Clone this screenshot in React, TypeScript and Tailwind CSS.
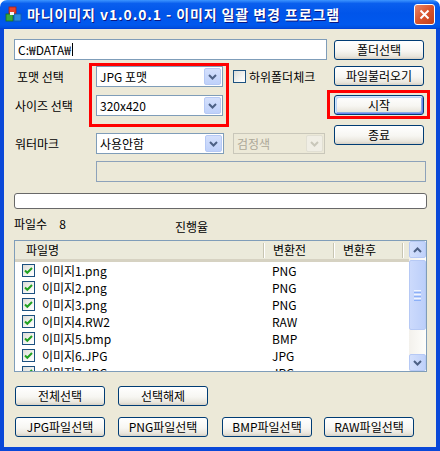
const Chevron = ({ up = false, color = "#4D6185" }: { up?: boolean; color?: string }) => (
  <svg width="9" height="6" viewBox="0 0 9 6">
    <path d={up ? "M1 5 L4.5 1.5 L8 5" : "M1 1 L4.5 4.5 L8 1"} fill="none" stroke={color} strokeWidth="2" />
  </svg>
);

const XpButton = ({ label, focused = false, className = "" }: { label: string; focused?: boolean; className?: string }) => (
  <button
    className={`flex h-[20px] w-[90px] items-center justify-center rounded-[3px] border border-[#003C74] bg-[linear-gradient(180deg,#FFFFFF_0%,#F7F6F2_55%,#E9E6DD_85%,#D6D0C5_100%)] text-[12px] leading-none text-black ${
      focused
        ? "shadow-[inset_1px_1px_0_#CEE7FF,inset_-1px_-1px_0_#6982EE,inset_2px_2px_0_#BCD4F6,inset_-2px_-2px_0_#89ADE4]"
        : ""
    } ${className}`}
  >
    {label}
  </button>
);

const Combo = ({ value, w, disabled = false }: { value: string; w: string; disabled?: boolean }) => (
  <div
    className={`flex h-[21px] ${w} items-center border pl-[3px] pr-[1px] ${
      disabled ? "border-[#C9C7BA] bg-[#ECE9D8] text-[#ACA899]" : "border-[#7F9DB9] bg-white text-black"
    }`}
  >
    <span className="flex-1 text-[12px] leading-none">{value}</span>
    <div
      className={`flex h-[17px] w-[17px] items-center justify-center rounded-[2px] border ${
        disabled
          ? "border-[#E1DFD3] bg-[#F0EEE5]"
          : "border-[#B6C9F5] bg-[linear-gradient(180deg,#D4E0FC_0%,#BFD1FA_100%)]"
      }`}
    >
      <Chevron color={disabled ? "#C9C7BA" : "#4D6185"} />
    </div>
  </div>
);

const CheckBox = ({ checked = false, className = "" }: { checked?: boolean; className?: string }) => (
  <div
    className={`flex h-[13px] w-[13px] shrink-0 items-center justify-center border border-[#1C5180] bg-[linear-gradient(135deg,#DCDCD7_0%,#F8F8F6_70%,#FFFFFF_100%)] ${className}`}
  >
    {checked && (
      <svg width="11" height="11" viewBox="0 0 11 11">
        <path d="M2 5.5 L4.3 7.8 L9 3" fill="none" stroke="#21A121" strokeWidth="2" />
      </svg>
    )}
  </div>
);

const ScrollBtn = ({ up }: { up?: boolean }) => (
  <div className="flex h-[17px] w-[17px] items-center justify-center rounded-[2px] border border-[#B6C9F5] bg-[linear-gradient(90deg,#D4E0FC_0%,#BFD1FA_100%)]">
    <Chevron up={up} />
  </div>
);

const files = [
  ["이미지1.png", "PNG"],
  ["이미지2.png", "PNG"],
  ["이미지3.png", "PNG"],
  ["이미지4.RW2", "RAW"],
  ["이미지5.bmp", "BMP"],
  ["이미지6.JPG", "JPG"],
  ["이미지7.JPG", "JPG"],
];

const HeaderDivider = () => (
  <div className="h-[15px] w-[2px] border-l border-r border-l-[#C7C5B2] border-r-white" />
);

export default function App() {
  return (
    <div className="relative flex h-[451px] w-[440px] flex-col bg-white font-['Noto_Sans_CJK_KR',sans-serif] text-[12px] text-black">
      {/* title bar */}
      <div className="flex h-[29px] shrink-0 items-center rounded-t-[7px] bg-[linear-gradient(180deg,#3D95FF_0%,#0A5FEE_12%,#0055EA_45%,#0058EE_85%,#0050E0_95%,#003DD7_100%)] pl-[5px] pr-[5px]">
        <svg width="17" height="17" viewBox="0 0 17 17">
          <rect x="4" y="1" width="7" height="7" fill="#E8412C" stroke="#A82214" strokeWidth="0.8" />
          <rect x="1" y="8" width="7" height="7" fill="#3BAA3A" stroke="#1D6E1D" strokeWidth="0.8" />
          <rect x="9" y="8" width="7" height="7" fill="#2D8CE0" stroke="#145A9E" strokeWidth="0.8" />
          <rect x="5" y="6" width="4" height="3" fill="#F5F5F5" />
        </svg>
        <span className="ml-[5px] text-[14px] font-bold tracking-[0.9px] text-white [text-shadow:1px_1px_#0A1883]">
          마니이미지 v1.0.0.1 - 이미지 일괄 변경 프로그램
        </span>
        <div className="ml-auto flex h-[21px] w-[21px] items-center justify-center rounded-[3px] border border-white bg-[linear-gradient(135deg,#E8866A_0%,#D9542D_50%,#C1401C_100%)]">
          <svg width="11" height="11" viewBox="0 0 11 11">
            <path d="M1.5 1.5 L9.5 9.5 M9.5 1.5 L1.5 9.5" stroke="white" strokeWidth="2" />
          </svg>
        </div>
      </div>

      {/* body */}
      <div className="flex flex-1 flex-col border-x-4 border-b-4 border-[#0A48D8] bg-[#ECE9D8] pl-[10px] pt-[10px]">
        <div className="flex">
          <div className="flex w-[320px] flex-col">
            <div className="flex h-[21px] w-[313px] items-center border border-[#7F9DB9] bg-white pl-[3px] leading-none">
              C:₩DATA₩<span className="ml-px h-[13px] w-px bg-black" />
            </div>
            <div className="mt-[6px] flex h-[21px] items-center">
              <span className="w-[82px] pl-[3px] leading-none">포맷 선택</span>
              <Combo value="JPG 포맷" w="w-[127px]" />
              <CheckBox className="ml-[10px]" />
              <span className="ml-[3px] leading-none">하위폴더체크</span>
            </div>
            <div className="mt-[8px] flex h-[21px] items-center">
              <span className="w-[82px] pl-px leading-none">사이즈 선택</span>
              <Combo value="320x420" w="w-[127px]" />
            </div>
            <div className="mt-[17px] flex h-[21px] items-center">
              <span className="w-[82px] pl-px leading-none">워터마크</span>
              <Combo value="사용안함" w="w-[128px]" />
              <div className="ml-[9px]">
                <Combo value="검정색" w="w-[92px]" disabled />
              </div>
            </div>
          </div>
          <div className="flex flex-col">
            <XpButton label="폴더선택" className="mt-px" />
            <XpButton label="파일불러오기" className="mt-[6px]" />
            <XpButton label="시작" focused className="mt-[9px]" />
            <XpButton label="종료" className="mt-[10px]" />
          </div>
        </div>

        <div className="ml-[82px] mt-[7px] h-[21px] w-[330px] border border-[#8DA2BA] bg-[#ECE9D8]" />

        <div className="mt-[11px] h-[16px] w-[413px] rounded-[3px] border border-[#686868] bg-white" />

        <div className="mt-[7px] flex h-[16px] items-center leading-none">
          <span className="flex w-[161px] items-center">
            <span>파일수</span>
            <span className="ml-[12px]">8</span>
          </span>
          <span className="mt-[5px]">진행율</span>
        </div>

        {/* file list */}
        <div className="mt-[8px] flex h-[132px] w-[413px] border border-[#7F9DB9] bg-white">
          <div className="flex flex-1 flex-col overflow-hidden">
            <div className="flex h-[21px] shrink-0 items-center border-b-[3px] border-[#D6D2C2] bg-[#EBEADB] leading-none">
              <span className="w-[248px] pl-[11px]">파일명</span>
              <HeaderDivider />
              <span className="w-[68px] pl-[8px]">변환전</span>
              <HeaderDivider />
              <span className="w-[67px] pl-[8px]">변환후</span>
              <HeaderDivider />
            </div>
            {files.map(([name, type]) => (
              <div key={name} className="flex h-[17px] shrink-0 items-center leading-none">
                <CheckBox checked className="ml-[7px]" />
                <span className="ml-[7px] w-[223px]">{name}</span>
                <span className="pl-[7px]">{type}</span>
              </div>
            ))}
          </div>
          <div className="flex w-[17px] flex-col bg-[linear-gradient(90deg,#F3F1EC_0%,#FEFEFB_100%)]">
            <ScrollBtn up />
            <div className="mt-[2px] flex h-[70px] flex-col items-center justify-center gap-[1px] rounded-[2px] border border-[#B6C9F5] bg-[linear-gradient(90deg,#CCDAFC_0%,#BCCFFA_100%)]">
              <div className="h-px w-[7px] bg-[#EEF4FE]" />
              <div className="h-px w-[7px] bg-[#8CB0F8]" />
              <div className="h-px w-[7px] bg-[#EEF4FE]" />
              <div className="h-px w-[7px] bg-[#8CB0F8]" />
              <div className="h-px w-[7px] bg-[#EEF4FE]" />
              <div className="h-px w-[7px] bg-[#8CB0F8]" />
            </div>
            <div className="flex-1" />
            <ScrollBtn />
          </div>
        </div>

        <div className="mt-[14px] flex">
          <XpButton label="전체선택" className="ml-px" />
          <XpButton label="선택해제" className="ml-[13px]" />
        </div>
        <div className="mt-[11px] flex">
          <XpButton label="JPG파일선택" className="ml-px" />
          <XpButton label="PNG파일선택" className="ml-[13px]" />
          <XpButton label="BMP파일선택" className="ml-[14px]" />
          <XpButton label="RAW파일선택" className="ml-[12px]" />
        </div>
      </div>

      {/* red annotation boxes */}
      <div className="pointer-events-none absolute left-[89px] top-[63px] h-[64px] w-[140px] border-[3px] border-[#FF0000]" />
      <div className="pointer-events-none absolute left-[327px] top-[90px] h-[29px] w-[103px] border-[3px] border-[#FF0000]" />
    </div>
  );
}
